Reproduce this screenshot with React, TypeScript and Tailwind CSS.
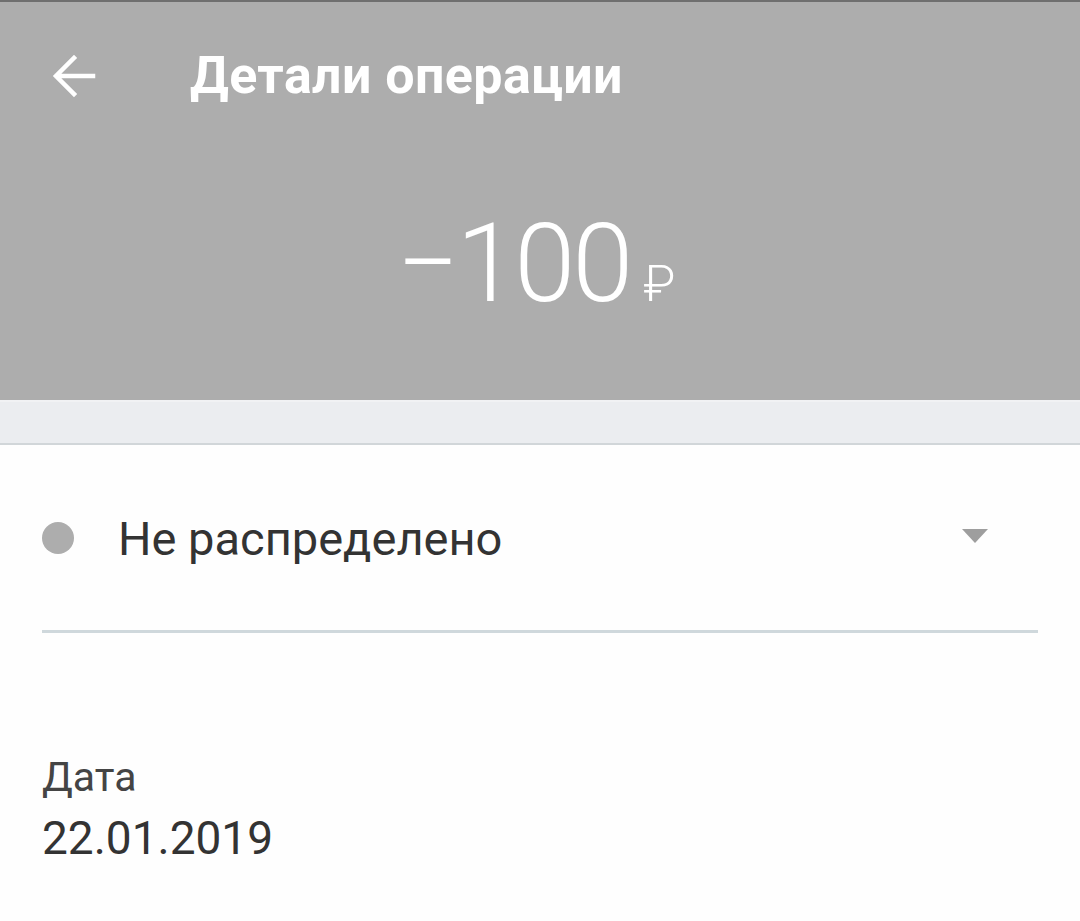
import React from 'react'

const BackArrow = () => (
  <svg width="44" height="44" viewBox="0 0 44 44" fill="none">
    <path d="M41 22H5M22 4L4 22l18 18" stroke="white" strokeWidth="4.5" strokeLinecap="square" />
  </svg>
)

const App = () => {
  return (
    <div className="min-h-[921px] w-[1080px] bg-[#fefefe] font-['Roboto',sans-serif]">
      {/* Header */}
      <div className="h-[400px] border-t-2 border-[#6f6f6f] bg-[#adadad] flex flex-col">
        <div className="flex items-center h-[150px] pb-[2px]">
          <div className="w-[190px] pl-[52px] flex items-center">
            <BackArrow />
          </div>
          <h1 className="text-[52px] font-bold text-white leading-none tracking-[0.4px]">Детали операции</h1>
        </div>
        <div className="flex items-baseline justify-center pt-[57px] pr-[8px]">
          <span className="text-[110px] font-light text-white leading-none tracking-[-3px]">−100</span>
          <span className="ml-[13px] text-[50px] font-light text-white leading-none">₽</span>
        </div>
      </div>

      {/* Spacer band */}
      <div className="h-[45px] bg-[#ebedf0] border-t-2 border-[#f1f2f4] border-b-2 border-b-[#d1d6d9]" />

      {/* Category select */}
      <div className="px-[42px]">
        <div className="flex items-center h-[188px] border-b-[3px] border-[#cfd8dc]">
          <div className="w-[32px] h-[32px] rounded-full bg-[#adadad]" />
          <span className="ml-[44px] text-[47px] text-[#333333] leading-none flex-1 pt-[2px]">Не распределено</span>
          <svg width="26" height="14" viewBox="0 0 26 14" className="mr-[50px] mb-[4px]">
            <path d="M0 0h26L13 14z" fill="#9e9e9e" />
          </svg>
        </div>

        {/* Date */}
        <div className="pt-[124px] flex flex-col">
          <span className="text-[41px] text-[#444444] leading-none">Дата</span>
          <span className="mt-[17px] text-[46px] text-[#333333] leading-none">22.01.2019</span>
        </div>
      </div>
    </div>
  )
}

export default App
